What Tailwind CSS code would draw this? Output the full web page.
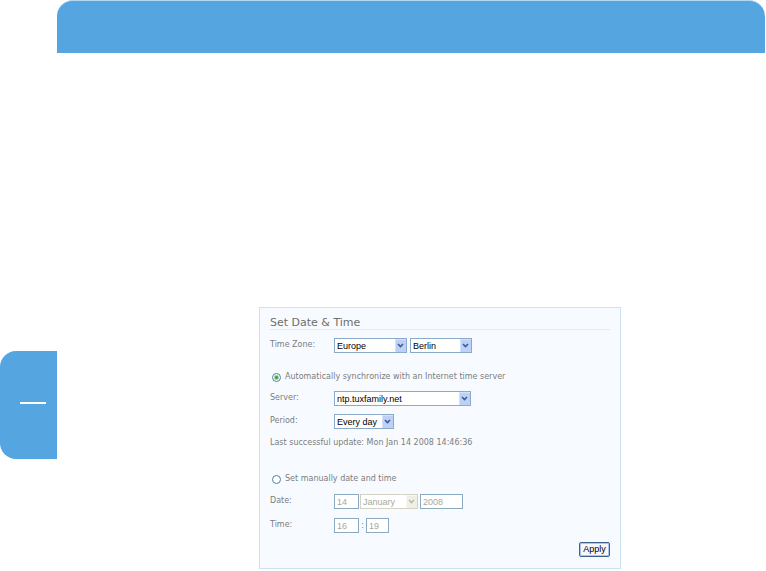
<!DOCTYPE html>
<html lang="en">
<head>
<meta charset="utf-8">
<meta name="viewport" content="width=device-width, initial-scale=1">
<title>Set Date &amp; Time</title>
<script src="https://cdn.jsdelivr.net/npm/@tailwindcss/browser@4"></script>
</head>
<body class="bg-white font-['DejaVu_Sans',sans-serif] text-[8px] leading-[14px] text-[#7c7c7c]">
<svg class="hidden" aria-hidden="true">
  <symbol id="drop" viewBox="0 0 11 13"><rect width="11" height="13" rx="1" fill="#bdd0f8"/><path d="M0.500 12.500V0.500H10.500" fill="none" stroke="#d5e2fc"/><path d="M3 5 5.500 7.500 8 5" fill="none" stroke="#405a90" stroke-width="1.600"/></symbol>
  <symbol id="drop-off" viewBox="0 0 11 13"><rect width="11" height="13" rx="1" fill="#f0efe6"/><path d="M0.500 12.500V0.500H10.500" fill="none" stroke="#f8f7f1"/><path d="M3 5 5.500 7.500 8 5" fill="none" stroke="#bdbbaa" stroke-width="1.600"/></symbol>
</svg>
<header class="ml-[57px] mr-px h-[53px] rounded-t-2xl border-t border-[#b5d8f1] bg-[#54a5e0]"></header>
<div class="flex items-start">
  <aside class="mt-[298px] flex h-[108px] w-[57px] shrink-0 items-center rounded-l-2xl bg-[#54a5e0] pl-5">
    <div class="mb-1 h-0.5 w-[26px] bg-white"></div>
  </aside>
  <main class="ml-[202px] mr-[145px] mt-[254px] min-w-0 flex-1 border border-[#cae4f4] bg-[#f7fbff] px-2.5 pb-[11px]">
    <form>
      <h1 class="h-[22px] border-b border-[#e0edf3] pt-2 text-[11px] leading-[14px] text-[#6e6e6e]">Set Date &amp; Time</h1>
      <div class="mt-2 flex h-[15px] items-start">
        <label for="region" class="w-16 shrink-0">Time Zone:</label>
        <div class="relative mr-[3px]">
          <select id="region" class="block h-[15px] w-[73px] appearance-none border border-[#8ba9c8] bg-white pl-0.5 pt-px font-['Liberation_Sans',sans-serif] text-[9px] leading-3 text-black"><option>Europe</option></select>
          <svg class="pointer-events-none absolute right-px top-px h-[13px] w-[11px]"><use href="#drop"/></svg>
        </div>
        <div class="relative">
          <select aria-label="City" class="block h-[15px] w-[62px] appearance-none border border-[#8ba9c8] bg-white pl-0.5 pt-px font-['Liberation_Sans',sans-serif] text-[9px] leading-3 text-black"><option>Berlin</option></select>
          <svg class="pointer-events-none absolute right-px top-px h-[13px] w-[11px]"><use href="#drop"/></svg>
        </div>
      </div>
      <div class="mt-[17px] flex h-[14px] items-center gap-1 pl-0.5">
        <input type="radio" id="auto" name="mode" checked class="size-[9px] appearance-none rounded-full border border-[#55809e] bg-white bg-[radial-gradient(circle,#3ba63b_0_1px,transparent_3px)]">
        <label for="auto">Automatically synchronize with an Internet time server</label>
      </div>
      <div class="mt-[7px] flex h-[15px] items-start">
        <label for="server" class="w-16 shrink-0">Server:</label>
        <div class="relative">
          <select id="server" class="block h-[15px] w-[137px] appearance-none border border-[#8ba9c8] bg-white pl-0.5 pt-px font-['Liberation_Sans',sans-serif] text-[9px] leading-3 text-black"><option>ntp.tuxfamily.net</option></select>
          <svg class="pointer-events-none absolute right-px top-px h-[13px] w-[11px]"><use href="#drop"/></svg>
        </div>
      </div>
      <div class="mt-2 flex h-[15px] items-start">
        <label for="period" class="w-16 shrink-0">Period:</label>
        <div class="relative">
          <select id="period" class="block h-[15px] w-[60px] appearance-none border border-[#8ba9c8] bg-white pl-0.5 pt-px font-['Liberation_Sans',sans-serif] text-[9px] leading-3 text-black"><option>Every day</option></select>
          <svg class="pointer-events-none absolute right-px top-px h-[13px] w-[11px]"><use href="#drop"/></svg>
        </div>
      </div>
      <p class="mt-[7px]">Last successful update: Mon Jan 14 2008 14:46:36</p>
      <div class="mt-[22px] flex h-[14px] items-center gap-1 pl-0.5">
        <input type="radio" id="manual" name="mode" class="size-[9px] appearance-none rounded-full border border-[#55809e] bg-white">
        <label for="manual">Set manually date and time</label>
      </div>
      <div class="mt-2 flex h-[15px] items-start">
        <label for="day" class="w-16 shrink-0">Date:</label>
        <input id="day" value="14" disabled class="mr-px h-[15px] w-[25px] border border-[#8ba9c0] bg-white px-0.5 font-['Liberation_Sans',sans-serif] text-[9px] leading-[13px] text-[#aaa89a]">
        <div class="relative mr-0.5">
          <select aria-label="Month" disabled class="block h-[15px] w-[58px] appearance-none border border-[#d4d2c2] bg-white pl-0.5 pt-px font-['Liberation_Sans',sans-serif] text-[9px] leading-3 text-[#aaa89a] opacity-100"><option>January</option></select>
          <svg class="pointer-events-none absolute right-px top-px h-[13px] w-[11px]"><use href="#drop-off"/></svg>
        </div>
        <input aria-label="Year" value="2008" disabled class="h-[15px] w-[43px] border border-[#8ba9c0] bg-white px-0.5 font-['Liberation_Sans',sans-serif] text-[9px] leading-[13px] text-[#aaa89a]">
      </div>
      <div class="mt-[9px] flex h-[15px] items-start">
        <label for="hour" class="w-16 shrink-0">Time:</label>
        <input id="hour" value="16" disabled class="h-[15px] w-[25px] border border-[#8ba9c0] bg-white px-0.5 font-['Liberation_Sans',sans-serif] text-[9px] leading-[13px] text-[#aaa89a]">
        <span class="w-[7px] text-center leading-[15px]">:</span>
        <input aria-label="Minute" value="19" disabled class="h-[15px] w-[23px] border border-[#8ba9c0] bg-white px-0.5 font-['Liberation_Sans',sans-serif] text-[9px] leading-[13px] text-[#aaa89a]">
      </div>
      <div class="mt-[9px] flex justify-end">
        <button type="button" class="h-[15px] w-[31px] rounded-xs border border-[#3f618f] bg-[#f6f7fb] text-center font-['Liberation_Sans',sans-serif] text-[9px] leading-[13px] text-black inset-ring inset-ring-[#a9c4f0]">Apply</button>
      </div>
    </form>
  </main>
</div>
</body>
</html>
